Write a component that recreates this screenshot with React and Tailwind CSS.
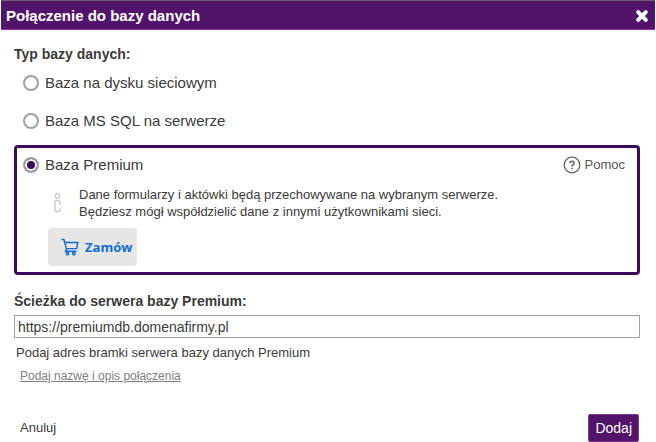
import React, { useState } from 'react';

const CloseIcon = () => (
  <svg viewBox="0 0 14 14" className="w-3.5 h-3.5" aria-hidden="true">
    <path d="M3.2 3.2L10.8 10.8M10.8 3.2L3.2 10.8" stroke="#ffffff" strokeWidth="4" strokeLinecap="round" fill="none" />
  </svg>
);

const InfoIcon = () => (
  <svg viewBox="0 0 8 20" className="w-2 h-5" fill="none" stroke="#cccccc" strokeWidth="1.4" aria-hidden="true">
    <circle cx="4.5" cy="3" r="2.2" />
    <path d="M7 12V9.5Q7 7.5 5 7.5H2V16.5Q2 18.5 4 18.5H5Q7 18.5 7 16.5V15.5" />
  </svg>
);

const HelpIcon = () => (
  <svg viewBox="0 0 18 18" className="w-[18px] h-[18px]" fill="none" stroke="#666666" aria-hidden="true">
    <circle cx="9" cy="9" r="7.8" strokeWidth="1.3" />
    <path d="M6.8 7.3Q6.9 5.2 9 5.2Q11.2 5.2 11.2 7.1Q11.2 8.2 10 8.9Q9 9.5 9 10.7" strokeWidth="1.5" />
    <path d="M9 11.8V13.3" strokeWidth="1.6" />
  </svg>
);

const CartIcon = () => (
  <svg viewBox="0 0 18 18" className="w-[18px] h-[18px]" fill="none" stroke="#0f6fd1" strokeWidth="1.4" strokeLinejoin="round" strokeLinecap="round" aria-hidden="true">
    <path d="M1 1.5H3L5.5 11.2L4.2 13.2H15" />
    <path d="M3.7 4.5H16.8L15.6 10.6H5.4" />
    <circle cx="6.5" cy="15.6" r="1.3" />
    <circle cx="12.8" cy="15.6" r="1.3" />
  </svg>
);

const RadioOption = ({ id, value, label, selected, onSelect }) => (
  <div className="flex items-center gap-1.5 text-[15px] leading-6">
    <input
      type="radio"
      id={id}
      name="dbType"
      value={value}
      checked={selected === value}
      onChange={() => onSelect(value)}
      className="appearance-none w-4 h-4 rounded-full border-2 border-[#a0a0a0] bg-white checked:bg-[#3b0a5a] checked:shadow-[inset_0_0_0_2px_#ffffff]"
    />
    <label htmlFor={id}>{label}</label>
  </div>
);

const App = () => {
  const [dbType, setDbType] = useState('premium');
  const [path, setPath] = useState('https://premiumdb.domenafirmy.pl');

  return (
    <div className="bg-white text-[#3a3a3a] font-['Liberation_Sans',Arial,sans-serif] text-[13px] leading-5">
      <header className="mx-px h-[30px] flex items-center justify-between pt-0.5 pl-[5px] pr-1.5 bg-[#52146a] border-t border-t-[#666666] border-b border-b-[#8a2eb0] text-white">
        <h1 className="text-[15px] leading-6 font-bold">Połączenie do bazy danych</h1>
        <button type="button" aria-label="Zamknij">
          <CloseIcon />
        </button>
      </header>

      <form className="pl-3.5 pr-4" onSubmit={(e) => e.preventDefault()}>
        <h2 className="pt-3.5 text-sm font-bold">Typ bazy danych:</h2>

        <div className="h-[38px] pl-[9px] flex items-center">
          <RadioOption id="db-network" value="network" label="Baza na dysku sieciowym" selected={dbType} onSelect={setDbType} />
        </div>
        <div className="h-[38px] pl-[9px] flex items-center">
          <RadioOption id="db-mssql" value="mssql" label="Baza MS SQL na serwerze" selected={dbType} onSelect={setDbType} />
        </div>

        <section className="mt-[5px] border-3 border-[#3b0a5a] rounded-sm pt-[5px] pb-1.5 pl-1.5 pr-3">
          <div className="flex items-center justify-between">
            <RadioOption id="db-premium" value="premium" label="Baza Premium" selected={dbType} onSelect={setDbType} />
            <a href="#pomoc" className="flex items-center gap-1 text-[#555555]">
              <HelpIcon />
              Pomoc
            </a>
          </div>
          <div className="mt-[9px] pl-[30px] flex items-center gap-[18px]">
            <InfoIcon />
            <p className="leading-[17px]">
              Dane formularzy i aktówki będą przechowywane na wybranym serwerze.
              <br />
              Będziesz mógł współdzielić dane z innymi użytkownikami sieci.
            </p>
          </div>
          <button type="button" className="mt-2 ml-[25px] h-[38px] pl-[13px] pr-[5px] flex items-center gap-1.5 rounded-sm bg-[#e6e6e6] text-[#0f6fd1] font-['Open_Sans',sans-serif] font-bold">
            <CartIcon />
            Zamów
          </button>
        </section>

        <label htmlFor="server-path" className="block mt-4 text-sm font-bold">
          Ścieżka do serwera bazy Premium:
        </label>
        <input
          id="server-path"
          type="text"
          value={path}
          onChange={(e) => setPath(e.target.value)}
          className="block mt-1 w-full h-[23px] px-[3px] border border-[#a0a0a0] bg-white text-sm"
        />
        <p className="mt-[5px] pl-0.5">Podaj adres bramki serwera bazy danych Premium</p>
        <a href="#opis" className="block w-fit mt-[3px] ml-1.5 text-xs leading-5 text-[#808080] underline">
          Podaj nazwę i opis połączenia
        </a>

        <div className="mt-7 flex items-center justify-between pl-1.5 pr-px">
          <button type="button">Anuluj</button>
          <button type="submit" className="h-7 px-1.5 rounded-xs border border-[#7a3a92] bg-[#52146a] text-sm text-white">
            Dodaj
          </button>
        </div>
      </form>
    </div>
  );
};

export default App;
